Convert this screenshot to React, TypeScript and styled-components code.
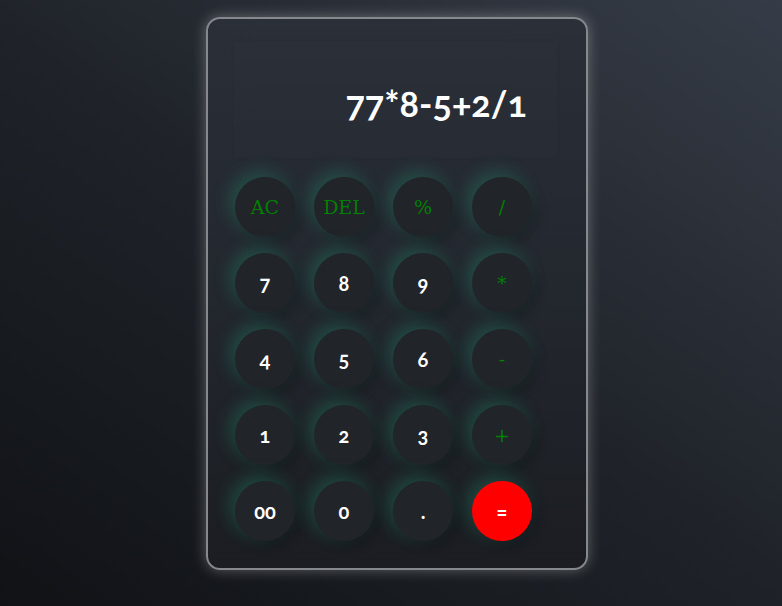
import styled, { createGlobalStyle } from "styled-components";

const GlobalStyle = createGlobalStyle`
  html, body {
    margin: 0;
    padding: 0;
    height: 100%;
  }
  body {
    background: linear-gradient(35deg, #101216 0%, #1f2329 50%, #363c47 100%);
    min-height: 606px;
    font-family: "DejaVu Serif", "Liberation Serif", serif;
  }
`;

const keys = [
  { label: "AC", op: true },
  { label: "DEL", op: true },
  { label: "%", op: true },
  { label: "/", op: true },
  { label: "7" },
  { label: "8" },
  { label: "9" },
  { label: "*", op: true },
  { label: "4" },
  { label: "5" },
  { label: "6" },
  { label: "-", op: true },
  { label: "1" },
  { label: "2" },
  { label: "3" },
  { label: "+", op: true },
  { label: "00" },
  { label: "0" },
  { label: "." },
  { label: "=", equal: true },
];

const App = () => {
  return (
    <Page>
      <GlobalStyle />
      <Card>
        <Display>
          <Screen>77*8-5+2/1</Screen>
        </Display>
        <Keys>
          {keys.map((k) => (
            <Key key={k.label} $op={!!k.op} $equal={!!k.equal}>
              {k.label}
            </Key>
          ))}
        </Keys>
      </Card>
    </Page>
  );
};

const Page = styled.div`
  display: flex;
  justify-content: center;
  align-items: flex-start;
  padding: 17px 0 0 12px;
  box-sizing: border-box;
  min-height: 606px;
`;

const Card = styled.div`
  width: 382px;
  height: 553px;
  box-sizing: border-box;
  border: 2px solid #85888d;
  border-radius: 14px;
  background: linear-gradient(180deg, #2a2f38 0%, #23272e 50%, #1b1d22 100%);
  box-shadow: 0 0 14px rgba(255, 255, 255, 0.3);
  padding: 23px 0 0 26px;
`;

const Display = styled.div`
  width: 323px;
  height: 116px;
  display: flex;
  align-items: center;
  justify-content: flex-end;
  padding-right: 30px;
  box-sizing: border-box;
  background: rgba(255, 255, 255, 0.006);
  box-shadow: 0 0 4px rgba(0, 0, 0, 0.05);
`;

const Screen = styled.div`
  color: #fff;
  font-family: Lato, "DejaVu Sans", sans-serif;
  font-size: 36px;
  font-weight: 700;
  font-variant-numeric: oldstyle-nums;
  padding-top: 6px;
`;

const Keys = styled.div`
  display: grid;
  grid-template-columns: repeat(4, 60px);
  grid-auto-rows: 60px;
  column-gap: 19px;
  row-gap: 16px;
  margin: 19px 0 0 1px;
`;

const Key = styled.button<{ $op: boolean; $equal: boolean }>`
  width: 60px;
  height: 60px;
  border-radius: 50%;
  border: none;
  padding: 0;
  display: flex;
  align-items: center;
  justify-content: center;
  font-family: ${(p) =>
    p.$op ? `"DejaVu Serif", "Liberation Serif", serif` : `Lato, "DejaVu Sans", sans-serif`};
  font-variant-numeric: oldstyle-nums;
  font-size: ${(p) => (p.$op ? "19px" : "20px")};
  font-weight: ${(p) => (p.$op ? 400 : 700)};
  color: ${(p) => (p.$op ? "#008000" : "#ffffff")};
  background: ${(p) => (p.$equal ? "#ff0000" : "#212429")};
  box-shadow: -5px -5px 18px rgba(35, 165, 125, 0.32),
    5px 5px 12px rgba(0, 0, 0, 0.22);
  cursor: pointer;
`;

export default App;
